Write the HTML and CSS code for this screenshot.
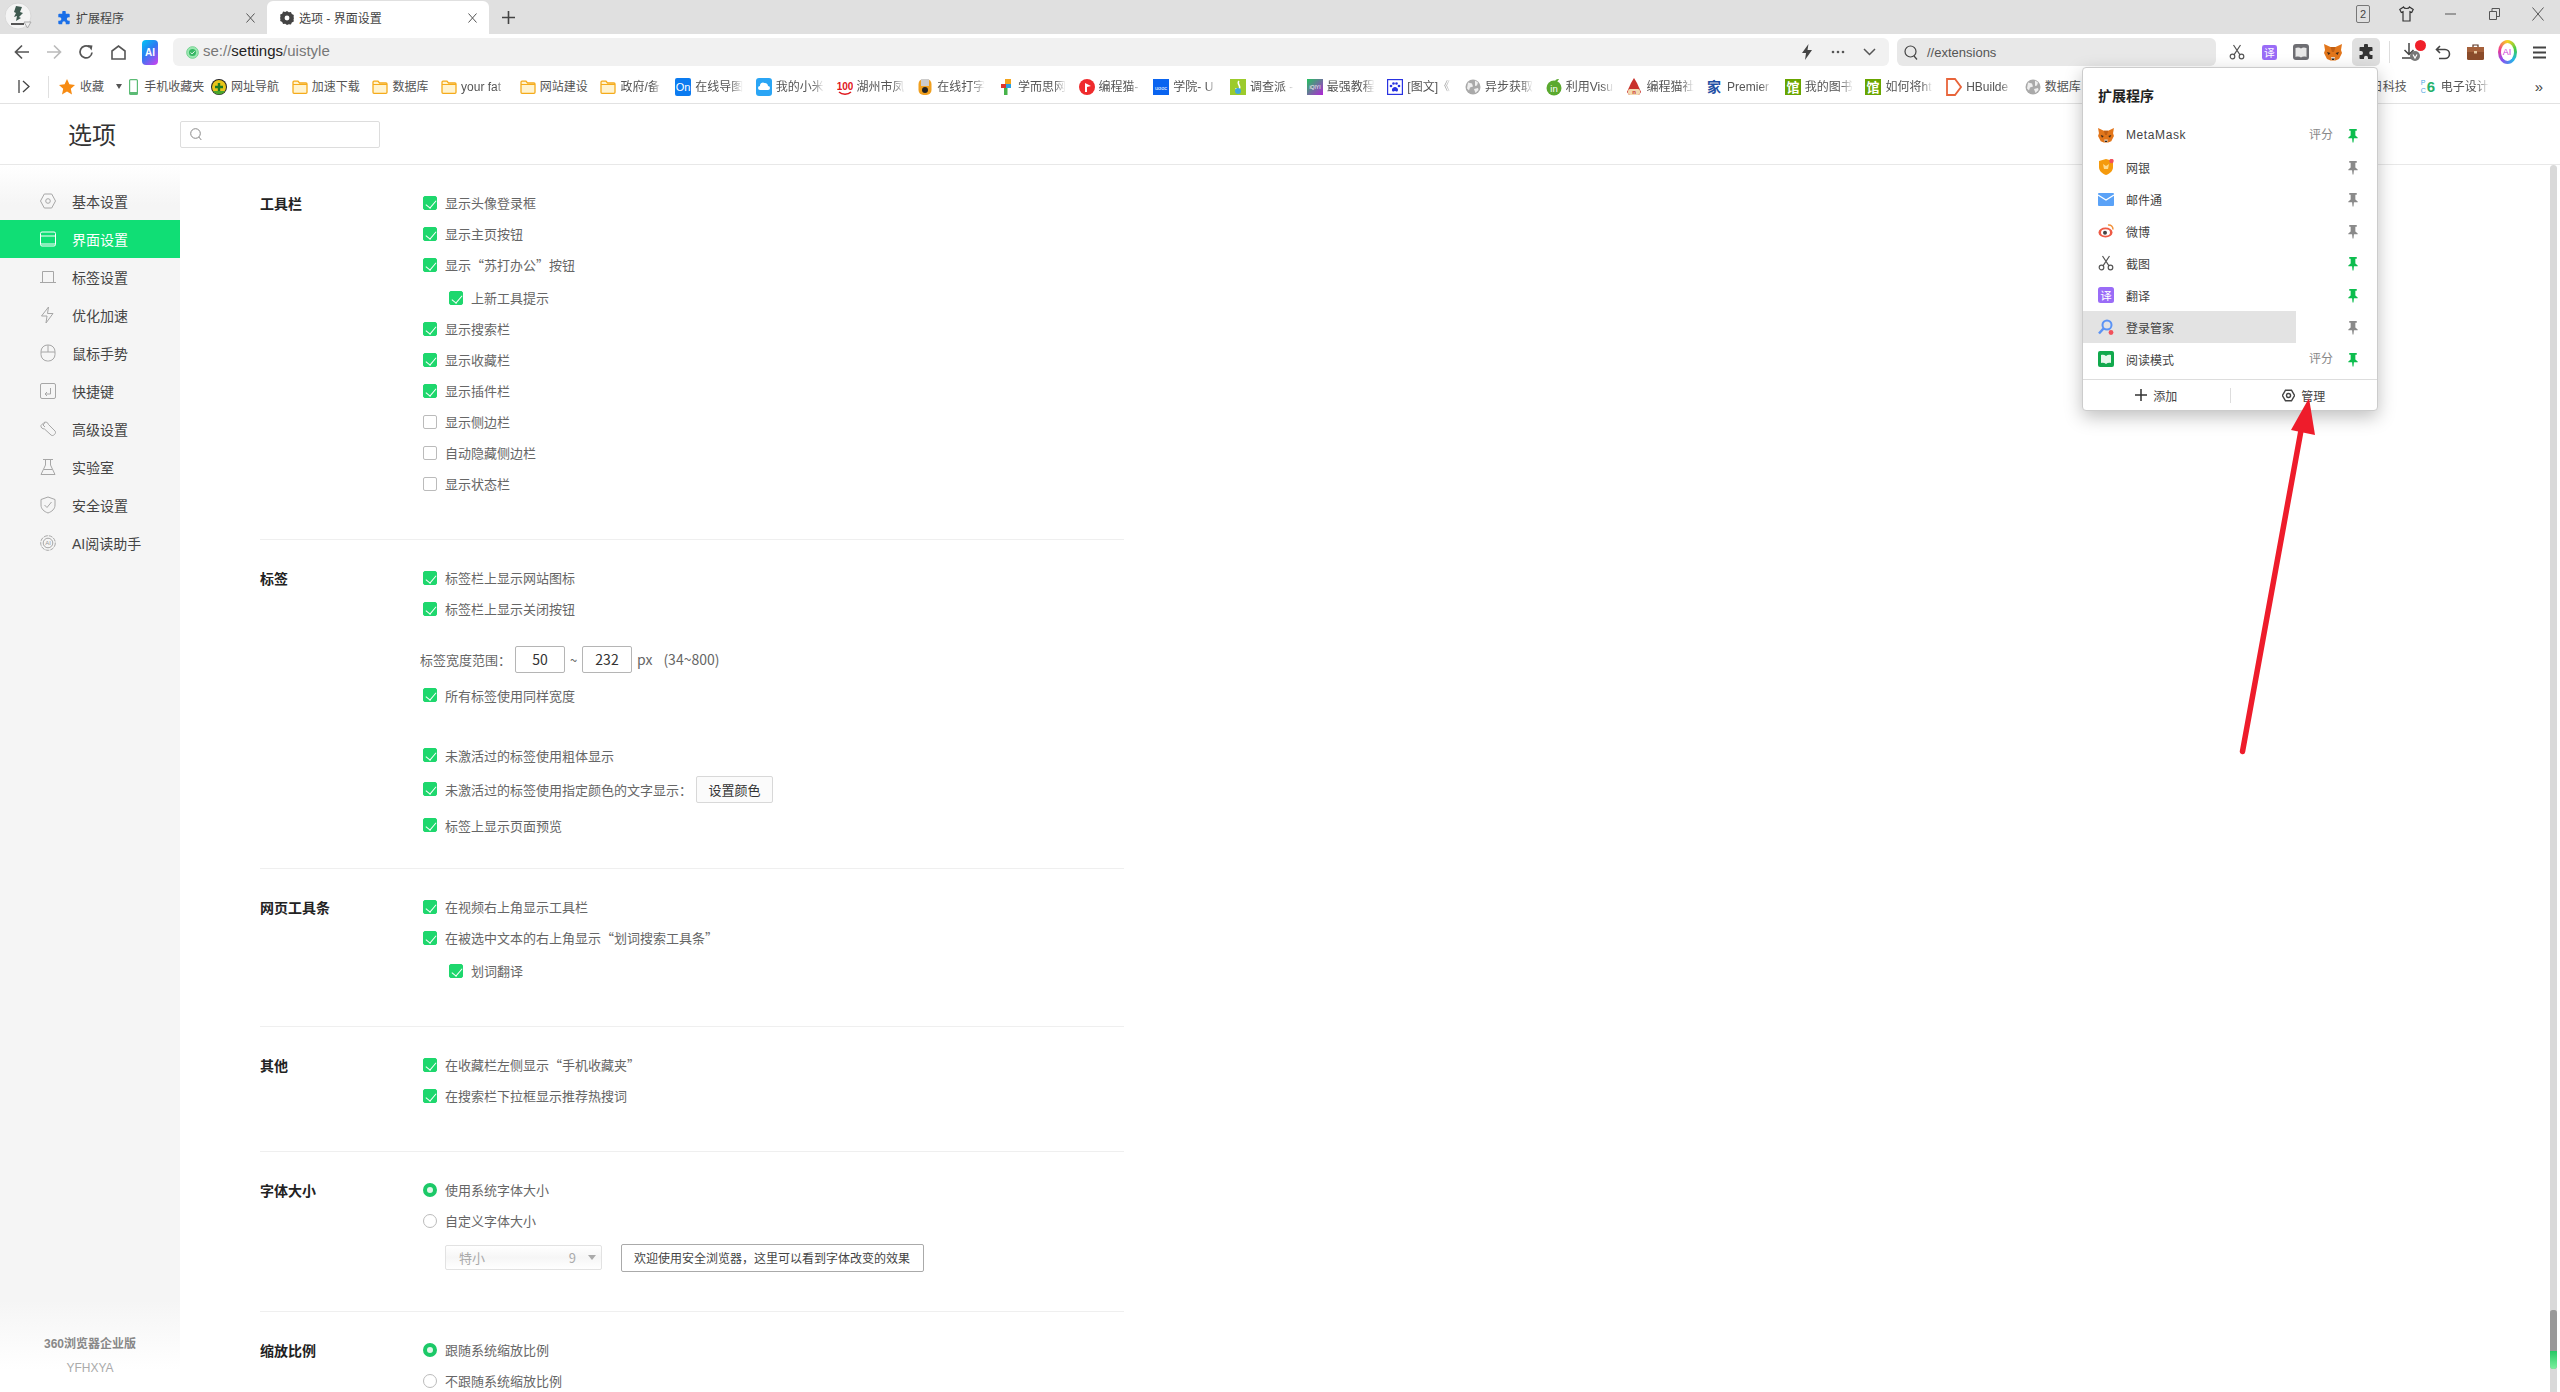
FILE: index.html
```html
<!DOCTYPE html>
<html lang="zh-CN">
<head>
<meta charset="utf-8">
<title>选项 - 界面设置</title>
<link rel="stylesheet" href="styles.css">
</head>
<body>
<svg class="sprite" aria-hidden="true">
  <symbol id="folder" viewBox="0 0 16 16"><path d="M1 3.2c0-.6.4-1 1-1h4l1.5 1.8H14c.6 0 1 .4 1 1v8.300c0 .6-.4 1-1 1H2c-.6 0-1-.4-1-1z" fill="#fff3cf" stroke="#f5ab1b" stroke-width="1.300"/><path d="M1 5.500h14" stroke="#f5ab1b"/></symbol>
  <symbol id="globe" viewBox="0 0 16 16"><circle cx="8" cy="8" r="7.500" fill="#a9a9a9"/><path d="M3 3.500l4 1 1 3-3 1-1 3-2-2zM10 1.500l3 2-1 3-2 .5zM9 10l4-1 .5 2-3 3z" fill="#eee"/></symbol>
  <symbol id="guan" viewBox="0 0 16 18"><rect y="1" width="16" height="16" fill="#68a500"/><text x="8" y="14" font-size="13" font-weight="700" text-anchor="middle" fill="#fff" font-family="Noto Sans CJK SC">馆</text></symbol>
  <symbol id="pin" viewBox="0 0 10 16"><path d="M1 1h8v2H7.500v5L10 10v1H6l-.5 4.500h-1L4 11H0v-1l2.500-2V3H1z"/></symbol>
  <symbol id="yi" viewBox="0 0 16 16"><rect width="16" height="16" rx="2.500" fill="#9a6cf7"/><text x="8" y="12.500" font-size="11.500" text-anchor="middle" fill="#fff" font-family="Noto Sans CJK SC">译</text></symbol>
  <symbol id="fox" viewBox="0 0 18 17"><path d="M0 0l6.500 3h5L18 0l-1 6 1 3-3 6-3.500 1.500h-5L3 15 0 9l1-3z" fill="#e2761b"/><path d="M3 8l3.500 1-2 2zM15 8l-3.500 1 2 2z" fill="#3a2a1c"/><path d="M7 13h4l-.5 3h-3z" fill="#e4d5c6"/><path d="M7.500 14.500h3L10 16H8z" fill="#222"/><path d="M6.500 3h5L10 8H8z" fill="#c05f14"/></symbol>
  <symbol id="scissors" viewBox="0 0 16 16"><g fill="none" stroke="#555" stroke-width="1.200"><circle cx="3.500" cy="12.500" r="2.300"/><circle cx="12.500" cy="12.500" r="2.300"/><path d="M5 10.800L11.500 1M11 10.800L4.500 1"/></g></symbol>
  <symbol id="puzzle" viewBox="0 0 16 16"><path d="M6 1.500a2 2 0 0 1 4 0V3h3.500c.6 0 1 .4 1 1v3h-1.300a2 2 0 0 0 0 4h1.300v3c0 .6-.4 1-1 1H10v-1.300a2 2 0 0 0-4 0V15H2.500c-.6 0-1-.4-1-1v-3H3a2 2 0 0 0 0-4H1.500V4c0-.6.4-1 1-1H6z"/></symbol>
  <symbol id="gear" viewBox="0 0 16 16"><path d="M4.300 1.500h7.400L15.500 8l-3.800 6.500H4.300L.5 8z" fill="none" stroke="currentColor" stroke-width="1.800"/><circle cx="8" cy="8" r="2.500" fill="none" stroke="currentColor" stroke-width="1.800"/></symbol>
</svg>

<header class="tabstrip">
  <div class="logo">
    <svg width="27" height="28" viewBox="0 0 27 28"><circle cx="13" cy="14" r="13" fill="#f4f4f4" stroke="#d8d8d8"/><path d="M11 4l6 1-2 5 3 1-4 4 2 1-5 3 1-5-3 1 2-4-2-1z" fill="#3f5a50"/><rect x="6" y="21" width="13" height="2" fill="#555"/><path d="M19 20h7l-3.500 6z" fill="#eee" stroke="#aaa"/></svg>
  </div>
  <div class="tab">
    <svg class="tab-ic tab-ic-blue" width="14" height="14"><use href="#puzzle"/></svg>
    <span class="tab-title">扩展程序</span>
    <svg class="tab-x" width="9" height="10" viewBox="0 0 9 10"><path d="M.5.500l8 9M8.500.500l-8 9" stroke="#555" fill="none"/></svg>
  </div>
  <div class="tab tab-active">
    <svg class="tab-ic" width="14" height="14" viewBox="0 0 16 16"><path d="M8 0l2 1.500 2.500-.3 1 2.300 2.300 1-.3 2.500L16 8l-.5 1.500.3 2.500-2.300 1-1 2.300-2.500-.3L8 16l-2-1.500-2.500.3-1-2.300-2.300-1 .3-2.500L0 8l.5-1.500L.2 4l2.300-1 1-2.300 2.500.3z" fill="#444"/><circle cx="8" cy="8" r="2.800" fill="#fff"/></svg>
    <span class="tab-title">选项 - 界面设置</span>
    <svg class="tab-x" width="9" height="10" viewBox="0 0 9 10"><path d="M.5.500l8 9M8.500.500l-8 9" stroke="#555" fill="none"/></svg>
  </div>
  <div class="newtab"><svg width="13" height="13" viewBox="0 0 13 13"><path d="M6.500 0v13M0 6.500h13" stroke="#444" stroke-width="1.600"/></svg></div>
  <div class="winctl">
    <div class="winbtn"><span class="count">2</span></div>
    <div class="winbtn"><svg width="15" height="16" viewBox="0 0 15 16"><path d="M4.500 1L.8 3.500l1.500 3 1.700-.8V15h7V5.700l1.700.8 1.500-3L10.500 1c-.5 2-5.500 2-6 0z" fill="none" stroke="#333" stroke-width="1.200"/></svg></div>
    <div class="winbtn"><svg width="11" height="2"><path d="M0 1h11" stroke="#555"/></svg></div>
    <div class="winbtn"><svg width="11" height="12" viewBox="0 0 11 12"><path d="M.5 3.500h7v8h-7zM3 3.500V.5h7.500v8H7.500" fill="none" stroke="#555"/></svg></div>
    <div class="winbtn"><svg width="12" height="14" viewBox="0 0 12 14"><path d="M.5.500l11 13M11.500.500l-11 13" stroke="#555" fill="none"/></svg></div>
  </div>
</header>

<nav class="toolbar">
  <div class="tbtn"><svg width="16" height="16" viewBox="0 0 16 16"><path d="M15 8H2M8 1.500L1.500 8 8 14.500" fill="none" stroke="#555" stroke-width="1.700"/></svg></div>
  <div class="tbtn"><svg width="16" height="16" viewBox="0 0 16 16"><path d="M1 8h13M8 1.500L14.500 8 8 14.500" fill="none" stroke="#bbb" stroke-width="1.700"/></svg></div>
  <div class="tbtn"><svg width="16" height="16" viewBox="0 0 16 16"><path d="M14 8.500A6 6 0 1 1 11.500 3" fill="none" stroke="#555" stroke-width="1.700"/><path d="M9.500 1l5 .5-1 5z" fill="#555"/></svg></div>
  <div class="tbtn"><svg width="15" height="15" viewBox="0 0 15 15"><path d="M1 14V6l6.500-5L14 6v8z" fill="none" stroke="#555" stroke-width="1.600"/></svg></div>
  <div class="tbtn"><span class="ai-badge">AI</span></div>
  <div class="addr">
    <svg width="13" height="13" viewBox="0 0 14 14"><circle cx="7" cy="7" r="6.300" fill="#9ce8b2" stroke="#6fd08c"/><circle cx="7" cy="7" r="3.800" fill="#37b765"/><path d="M5 7l1.500 1.500L9.300 5.700" fill="none" stroke="#fff"/></svg>
    <span class="url"><span class="url-dim">se://</span>settings<span class="url-dim">/uistyle</span></span>
    <span class="addr-actions">
      <svg width="12" height="16" viewBox="0 0 12 16"><path d="M7.500 0L1 9h4l-1 7 7-10H6.500z" fill="#444"/></svg>
      <svg width="14" height="4" viewBox="0 0 14 4"><circle cx="2" cy="2" r="1.300" fill="#555"/><circle cx="7" cy="2" r="1.300" fill="#555"/><circle cx="12" cy="2" r="1.300" fill="#555"/></svg>
      <svg width="13" height="8" viewBox="0 0 13 8"><path d="M1 1l5.500 5.500L12 1" fill="none" stroke="#555" stroke-width="1.500"/></svg>
    </span>
  </div>
  <div class="searchbar">
    <svg width="14" height="15" viewBox="0 0 14 15"><circle cx="6.500" cy="6.500" r="5.500" fill="none" stroke="#444" stroke-width="1.200"/><path d="M10 11l3 3.500" stroke="#444" stroke-width="1.200"/></svg>
    <span class="search-text">//extensions</span>
  </div>
  <div class="ext-icons">
    <div class="tbtn"><svg width="16" height="16"><use href="#scissors"/></svg></div>
    <div class="tbtn"><svg width="15" height="15"><use href="#yi"/></svg></div>
    <div class="tbtn"><svg width="16" height="16" viewBox="0 0 16 16"><rect width="16" height="16" rx="3" fill="#6e6e73"/><path d="M2.500 4c2-.8 4-.8 5.500.5v9c-1.500-1.200-3.500-1.200-5.500-.5zM13.500 4c-2-.8-4-.8-5.500.5v9c1.500-1.200 3.500-1.200 5.500-.5z" fill="#e8e8e8"/></svg></div>
    <div class="tbtn"><svg width="18" height="17"><use href="#fox"/></svg></div>
    <div class="tbtn tbtn-on"><svg class="ic-dark" width="16" height="16"><use href="#puzzle"/></svg></div>
  </div>
  <span class="tsep"></span>
  <div class="tbtn tbtn-dl">
    <svg width="20" height="20" viewBox="0 0 20 20"><path d="M8 1v11M3.500 8L8 12.500 12.500 8M1 16h10" fill="none" stroke="#444" stroke-width="1.500"/><circle cx="14" cy="14" r="5" fill="#777"/><path d="M12 12.500l2 3.500 2-3.500" fill="none" stroke="#fff" stroke-width="1.200"/></svg>
    <span class="dot"></span>
  </div>
  <div class="tbtn"><svg width="16" height="15" viewBox="0 0 16 15"><path d="M5 1L1.500 4.500 5 8M2 4.500h8a4.500 4.500 0 0 1 0 9H4" fill="none" stroke="#444" stroke-width="1.600"/></svg></div>
  <div class="tbtn"><svg width="17" height="16" viewBox="0 0 17 16"><path d="M6 3V1h5v2" fill="none" stroke="#5a3320" stroke-width="1.200"/><rect y="3" width="17" height="13" rx="1.500" fill="#8a4b2a"/><rect y="3" width="17" height="5" fill="#a5603a"/><rect x="7" y="7" width="3" height="2.500" fill="#e8c9a0"/></svg></div>
  <div class="tbtn"><span class="ai-ring"><span class="ai-ring-in">AI</span></span></div>
  <div class="tbtn"><svg width="13" height="13" viewBox="0 0 13 13"><path d="M0 1.500h13M0 6.500h13M0 11.500h13" stroke="#444" stroke-width="1.800"/></svg></div>
</nav>

<nav class="bookmarks">
  <svg class="bm-toggle" width="12" height="13" viewBox="0 0 12 13"><path d="M1 0v13M5 1l6 5.500L5 12" fill="none" stroke="#444" stroke-width="1.300"/></svg>
  <span class="bm-sep"></span>
  <div class="bm bm-fav"><svg width="16" height="16" viewBox="0 0 16 16"><path d="M8 0l2.400 5.300 5.600.6-4.200 3.800 1.200 5.800L8 12.500 3 15.500l1.200-5.800L0 5.900l5.600-.6z" fill="#f78b12"/></svg><span>收藏</span></div>
  <span class="bm-caret"></span>
  <div class="bm bm-phone"><svg width="9" height="16" viewBox="0 0 9 16"><rect x=".6" y=".6" width="7.800" height="14.800" rx="1" fill="#fff" stroke="#5cbb75" stroke-width="1.200"/><rect x=".6" y="13" width="7.800" height="2.400" fill="#5cbb75"/></svg><span>手机收藏夹</span></div>
  <div class="bm"><svg width="16" height="16" viewBox="0 0 16 16"><circle cx="8" cy="8" r="8" fill="#222"/><circle cx="8" cy="8" r="7" fill="#e8c51a"/><path d="M2 12a7 7 0 0 0 12 0z" fill="#4aa52c"/><path d="M8 4v8M4 8h8" stroke="#1e7a22" stroke-width="2.400"/></svg><span>网址导航</span></div>
  <div class="bm"><svg width="16" height="16"><use href="#folder"/></svg><span>加速下载</span></div>
  <div class="bm"><svg width="16" height="16"><use href="#folder"/></svg><span class="w36">数据库</span></div>
  <div class="bm"><svg width="16" height="16"><use href="#folder"/></svg><span class="clip w46">your fat</span></div>
  <div class="bm"><svg width="16" height="16"><use href="#folder"/></svg><span>网站建设</span></div>
  <div class="bm"><svg width="16" height="16"><use href="#folder"/></svg><span class="clip w42">政府/备</span></div>
  <div class="bm"><svg width="16" height="18" viewBox="0 0 16 18"><rect width="16" height="18" rx="2" fill="#0b7bf0"/><text x="8" y="13" font-size="11" text-anchor="middle" fill="#fff" font-family="Liberation Sans">On</text></svg><span class="clip">在线导图</span></div>
  <div class="bm"><svg width="16" height="18" viewBox="0 0 16 18"><rect width="16" height="18" rx="3" fill="#2aa5f5"/><path d="M4 12a2 2 0 0 1 0-4 3 3 0 0 1 4.500-3A3 3 0 0 1 12 8a2 2 0 0 1 0 4z" fill="#fff"/></svg><span class="clip">我的小米</span></div>
  <div class="bm"><svg width="16" height="18" viewBox="0 0 16 18"><text x="8" y="12" font-size="10" font-weight="700" text-anchor="middle" fill="#e0161c" font-family="Liberation Sans">100</text><path d="M2 14c3 3 9 3 12 0" fill="none" stroke="#e0161c" stroke-width="1.500"/></svg><span class="clip">湖州市凤</span></div>
  <div class="bm"><svg width="16" height="18" viewBox="0 0 16 18"><rect x="1.500" y="1" width="13" height="16" rx="5" fill="#f0a020"/><rect x="4" y="1" width="8" height="7" fill="#ccc"/><circle cx="8" cy="12" r="3" fill="#222"/></svg><span class="clip">在线打字</span></div>
  <div class="bm"><svg width="16" height="18" viewBox="0 0 16 18"><rect x="7" y="1" width="6" height="5" fill="#f3a41c"/><rect x="3" y="6" width="5" height="4" fill="#e0352b"/><rect x="8" y="6" width="5" height="4" fill="#2aa0e0"/><rect x="6" y="10" width="3.500" height="7" fill="#46b34a"/></svg><span class="clip">学而思网</span></div>
  <div class="bm"><svg width="16" height="18" viewBox="0 0 16 18"><circle cx="8" cy="9" r="8" fill="#ef2b2d"/><path d="M6 14V5l6 3-4 1v5z" fill="#fff"/></svg><span class="clip w42">编程猫-</span></div>
  <div class="bm"><svg width="16" height="18" viewBox="0 0 16 18"><rect y="1" width="16" height="16" fill="#0a64f0"/><text x="8" y="11.500" font-size="5.500" text-anchor="middle" fill="#fff" font-family="Liberation Sans">uooc</text></svg><span class="clip w44">学院- U</span></div>
  <div class="bm"><svg width="16" height="18" viewBox="0 0 16 18"><rect y="1" width="16" height="16" fill="#9ccb2c"/><path d="M9 3c-3 3 3 5 0 8-1 1-3 1-3-1" fill="none" stroke="#fff" stroke-width="1.500"/><circle cx="8" cy="13" r="3" fill="#3fa7dc"/></svg><span class="clip w44">调查派 -</span></div>
  <div class="bm"><svg width="16" height="18" viewBox="0 0 16 18"><defs><linearGradient id="iq" x1="0" y1="0" x2="1" y2="1"><stop offset="0" stop-color="#22c45e"/><stop offset="1" stop-color="#b324d8"/></linearGradient></defs><rect y="1" width="16" height="16" fill="url(#iq)"/><text x="8" y="11" font-size="5" text-anchor="middle" fill="#fff" font-family="Liberation Sans">iQIYI</text></svg><span class="clip">最强教程</span></div>
  <div class="bm"><svg width="16" height="18" viewBox="0 0 16 18"><rect x=".6" y="1.600" width="14.800" height="14.800" fill="#fff" stroke="#2932e1" stroke-width="1.200"/><path d="M8 9c-3 0-4 4-2 4.500 1 .2 1.500-.5 2-.5s1 .7 2 .5c2-.5 1-4.500-2-4.500z" fill="#2932e1"/><circle cx="4" cy="8" r="1.300" fill="#2932e1"/><circle cx="12" cy="8" r="1.300" fill="#2932e1"/><circle cx="6.500" cy="5.500" r="1.300" fill="#2932e1"/><circle cx="9.500" cy="5.500" r="1.300" fill="#2932e1"/></svg><span class="clip w45">[图文]《</span></div>
  <div class="bm"><svg width="16" height="16"><use href="#globe"/></svg><span class="clip">异步获取</span></div>
  <div class="bm"><svg width="16" height="18" viewBox="0 0 16 18"><ellipse cx="8" cy="10" rx="7.500" ry="7.500" fill="#5aa92f"/><path d="M9 3c1-2 3-2 4-2-1 2-2 3-4 2z" fill="#5aa92f"/><text x="8" y="14" font-size="9.500" text-anchor="middle" fill="#fff" font-family="Liberation Sans">in</text></svg><span class="clip">利用Visu</span></div>
  <div class="bm"><svg width="16" height="18" viewBox="0 0 16 18"><path d="M8 0l3 5 4 9-2 3H3l-2-3 4-9z" fill="#c9312b"/><rect x="2" y="11" width="12" height="6" rx="2" fill="#f2d9b0"/><text x="8" y="15.500" font-size="6" font-weight="700" text-anchor="middle" fill="#c9312b" font-family="Liberation Sans">n</text></svg><span class="clip">编程猫社</span></div>
  <div class="bm"><span class="jia">家</span><span class="clip w45">Premier</span></div>
  <div class="bm"><svg width="16" height="18"><use href="#guan"/></svg><span class="clip">我的图书</span></div>
  <div class="bm"><svg width="16" height="18"><use href="#guan"/></svg><span class="clip">如何将ht</span></div>
  <div class="bm"><svg width="16" height="18" viewBox="0 0 16 18"><path d="M1 1h8l6 8-6 8H1z" fill="#fff" stroke="#e8643a" stroke-width="1.800"/></svg><span class="clip w46">HBuilde</span></div>
  <div class="bm"><svg width="16" height="16"><use href="#globe"/></svg><span class="w36">数据库</span></div>
  <div class="bm-right">
    <div class="bm"><span>今日科技</span></div>
    <div class="bm"><span class="pc6"><span class="pc6-pc">P<br>C</span><span class="pc6-6">6</span></span><span class="clip">电子设计</span></div>
    <span class="bm-more">»</span>
  </div>
</nav>

<div class="page-head">
  <h1 class="page-title">选项</h1>
  <div class="page-search"><svg width="12" height="13" viewBox="0 0 12 13"><circle cx="5.500" cy="5.500" r="4.800" fill="none" stroke="#888"/><path d="M8.800 9l2.500 3" stroke="#888"/></svg></div>
</div>

<div class="layout">
  <aside class="sidebar">
    <a class="side-item"><svg width="16" height="16" viewBox="0 0 16 16"><path d="M4.300 1h7.400L15.500 8l-3.800 7H4.300L.5 8z"/><circle cx="8" cy="8" r="2.300"/></svg>基本设置</a>
    <a class="side-item side-active"><svg width="16" height="16" viewBox="0 0 16 16"><rect x=".5" y="1" width="15" height="14" rx="1.500"/><path d="M.5 5h15M.5 13h15"/></svg>界面设置</a>
    <a class="side-item"><svg width="16" height="16" viewBox="0 0 16 16"><path d="M2.500 13V2.500h11V13M0 13.500h16"/></svg>标签设置</a>
    <a class="side-item"><svg width="16" height="18" viewBox="0 0 16 18"><path d="M8.500 1L1.500 10h5.500l-1 7 7-9.500H7.500z"/></svg>优化加速</a>
    <a class="side-item"><svg width="16" height="18" viewBox="0 0 16 18"><rect x="1" y="1" width="14" height="16" rx="6.500"/><path d="M1 8h14M8 1v7"/></svg>鼠标手势</a>
    <a class="side-item"><svg width="16" height="16" viewBox="0 0 16 16"><rect x=".5" y=".5" width="15" height="15" rx="1.500"/><path d="M10.500 5v6H5M7 9l-2 2 2 2"/></svg>快捷键</a>
    <a class="side-item"><svg width="16" height="16" viewBox="0 0 16 16"><path d="M1 4.500L4 1.500c2-1 4 0 4.500 2L15 10c1 1 .5 2.500-.5 3.500s-2.500 1.500-3.500.5L4.500 8C2.500 8 .5 6.500 1 4.500zM5 1.500L3 4l2 2"/></svg>高级设置</a>
    <a class="side-item"><svg width="16" height="16" viewBox="0 0 16 16"><path d="M3 .5h10M5.500.5V6L1 15.500h14L10.500 6V.5M4 10.500h8"/></svg>实验室</a>
    <a class="side-item"><svg width="16" height="18" viewBox="0 0 16 18"><path d="M8 1l7 2.500V9c0 4-3 6.500-7 8-4-1.500-7-4-7-8V3.500zM4.500 9L7 11.500 11.500 6"/></svg>安全设置</a>
    <a class="side-item"><svg width="16" height="16" viewBox="0 0 16 16"><circle cx="8" cy="8" r="7.300" stroke-dasharray="4 1"/><circle cx="8" cy="8" r="4.800"/><text x="8" y="10.300" font-size="6" text-anchor="middle" fill="#999" stroke="none" font-family="Liberation Sans">AI</text></svg>AI阅读助手</a>
    <div class="side-foot">
      <div class="foot-name">360浏览器企业版</div>
      <div class="foot-id">YFHXYA</div>
    </div>
  </aside>

  <main class="content">
    <section class="section">
      <h2 class="sec-label">工具栏</h2>
      <div class="sec-rows">
        <label class="row"><i class="cb on"></i>显示头像登录框</label>
        <label class="row"><i class="cb on"></i>显示主页按钮</label>
        <label class="row"><i class="cb on"></i>显示“苏打办公”按钮</label>
        <label class="row sub"><i class="cb on"></i>上新工具提示</label>
        <label class="row"><i class="cb on"></i>显示搜索栏</label>
        <label class="row"><i class="cb on"></i>显示收藏栏</label>
        <label class="row"><i class="cb on"></i>显示插件栏</label>
        <label class="row"><i class="cb"></i>显示侧边栏</label>
        <label class="row"><i class="cb"></i>自动隐藏侧边栏</label>
        <label class="row"><i class="cb"></i>显示状态栏</label>
      </div>
    </section>
    <section class="section section-tight">
      <h2 class="sec-label">标签</h2>
      <div class="sec-rows">
        <label class="row"><i class="cb on"></i>标签栏上显示网站图标</label>
        <label class="row"><i class="cb on"></i>标签栏上显示关闭按钮</label>
        <div class="row-range">
          <span class="range-label">标签宽度范围：</span><span class="num">50</span><span class="tilde">~</span><span class="num">232</span><span class="unit">px</span><span class="hint">(34~800)</span>
        </div>
        <label class="row after-range"><i class="cb on"></i>所有标签使用同样宽度</label>
        <label class="row after-gap"><i class="cb on"></i>未激活过的标签使用粗体显示</label>
        <label class="row with-btn"><i class="cb on"></i>未激活过的标签使用指定颜色的文字显示：<span class="btn">设置颜色</span></label>
        <label class="row after-btn"><i class="cb on"></i>标签上显示页面预览</label>
      </div>
    </section>
    <section class="section">
      <h2 class="sec-label">网页工具条</h2>
      <div class="sec-rows">
        <label class="row"><i class="cb on"></i>在视频右上角显示工具栏</label>
        <label class="row"><i class="cb on"></i>在被选中文本的右上角显示“划词搜索工具条”</label>
        <label class="row sub"><i class="cb on"></i>划词翻译</label>
      </div>
    </section>
    <section class="section">
      <h2 class="sec-label">其他</h2>
      <div class="sec-rows">
        <label class="row"><i class="cb on"></i>在收藏栏左侧显示“手机收藏夹”</label>
        <label class="row"><i class="cb on"></i>在搜索栏下拉框显示推荐热搜词</label>
      </div>
    </section>
    <section class="section">
      <h2 class="sec-label">字体大小</h2>
      <div class="sec-rows">
        <label class="row"><i class="rd on"></i>使用系统字体大小</label>
        <label class="row"><i class="rd"></i>自定义字体大小</label>
        <div class="row-font">
          <div class="select"><span>特小</span><span class="select-num">9</span><span class="select-caret"></span></div>
          <div class="preview">欢迎使用安全浏览器，这里可以看到字体改变的效果</div>
        </div>
      </div>
    </section>
    <section class="section section-last">
      <h2 class="sec-label">缩放比例</h2>
      <div class="sec-rows">
        <label class="row"><i class="rd on"></i>跟随系统缩放比例</label>
        <label class="row"><i class="rd"></i>不跟随系统缩放比例</label>
      </div>
    </section>
  </main>

  <div class="scrollbar"><div class="thumb"><div class="thumb-green"></div></div></div>
</div>

<div class="popup">
  <div class="popup-title">扩展程序</div>
  <div class="ext-row"><div class="ext-main"><svg width="16" height="15"><use href="#fox"/></svg><span class="ext-name ext-latin">MetaMask</span></div><span class="ext-score">评分</span><svg class="pin pin-on" width="10" height="15"><use href="#pin"/></svg></div>
  <div class="ext-row"><div class="ext-main"><svg width="16" height="16" viewBox="0 0 16 16"><path d="M1 2l7-2 7 2v6c0 4-3 6.500-7 8-4-1.500-7-4-7-8z" fill="#f59a0c"/><path d="M5 5l3 2 3-2-1 5H6z" fill="#ffd98a"/><circle cx="13.500" cy="2" r="2.200" fill="#f2515b"/></svg><span class="ext-name">网银</span></div><span class="ext-score"></span><svg class="pin" width="10" height="15"><use href="#pin"/></svg></div>
  <div class="ext-row"><div class="ext-main"><svg width="16" height="13" viewBox="0 0 16 13"><rect width="16" height="13" rx="1" fill="#5aa2f7"/><path d="M0 2l8 5 8-5" fill="none" stroke="#fff" stroke-width="1.300"/></svg><span class="ext-name">邮件通</span></div><span class="ext-score"></span><svg class="pin" width="10" height="15"><use href="#pin"/></svg></div>
  <div class="ext-row"><div class="ext-main"><svg width="16" height="14" viewBox="0 0 16 14"><ellipse cx="7.500" cy="8.500" rx="7" ry="5" fill="#ee5a45"/><ellipse cx="7.500" cy="8.500" rx="4.500" ry="3.200" fill="#fff"/><circle cx="7" cy="8.800" r="2" fill="#444"/><path d="M10 1c3-.5 5 1.500 5 4.500" fill="none" stroke="#f2913a" stroke-width="1.500"/></svg><span class="ext-name">微博</span></div><span class="ext-score"></span><svg class="pin" width="10" height="15"><use href="#pin"/></svg></div>
  <div class="ext-row"><div class="ext-main"><svg width="16" height="16"><use href="#scissors"/></svg><span class="ext-name">截图</span></div><span class="ext-score"></span><svg class="pin pin-on" width="10" height="15"><use href="#pin"/></svg></div>
  <div class="ext-row"><div class="ext-main"><svg width="16" height="16"><use href="#yi"/></svg><span class="ext-name">翻译</span></div><span class="ext-score"></span><svg class="pin pin-on" width="10" height="15"><use href="#pin"/></svg></div>
  <div class="ext-row"><div class="ext-main ext-hover"><svg width="16" height="16" viewBox="0 0 16 16"><circle cx="9" cy="6" r="4.500" fill="none" stroke="#5b93f5" stroke-width="2"/><path d="M5.500 9.500L1 14.500" stroke="#5b93f5" stroke-width="2.500"/><circle cx="13" cy="13.500" r="2.400" fill="#f2515b"/></svg><span class="ext-name">登录管家</span></div><span class="ext-score"></span><svg class="pin" width="10" height="15"><use href="#pin"/></svg></div>
  <div class="ext-row"><div class="ext-main"><svg width="16" height="16" viewBox="0 0 16 16"><rect width="16" height="16" rx="2" fill="#11a94d"/><path d="M3 4c2-.5 3.500-.3 5 1v8c-1.500-1.200-3-1.400-5-1zM13 4c-2-.5-3.500-.3-5 1v8c1.500-1.200 3-1.400 5-1z" fill="#e6f7ec"/></svg><span class="ext-name">阅读模式</span></div><span class="ext-score">评分</span><svg class="pin pin-on" width="10" height="15"><use href="#pin"/></svg></div>
  <div class="popup-foot">
    <div class="foot-act"><svg width="12" height="12" viewBox="0 0 12 12"><path d="M6 0v12M0 6h12" stroke="#333" stroke-width="1.500"/></svg>添加</div>
    <span class="foot-sep"></span>
    <div class="foot-act"><svg class="foot-gear" width="13" height="13"><use href="#gear"/></svg>管理</div>
  </div>
</div>

<svg class="arrow" width="90" height="370" viewBox="2235 395 90 370" aria-hidden="true">
  <path d="M2242.500 751.500L2302 425" fill="none" stroke="#ee1c2b" stroke-width="5.500" stroke-linecap="round"/>
  <path d="M2309 398L2315 435 2291 430z" fill="#ee1c2b"/>
</svg>
</body>
</html>
```

FILE: styles.css
```css
* { box-sizing: border-box; }
html, body { margin: 0; height: 100%; overflow: hidden; }
body {
  position: relative;
  display: flex;
  flex-direction: column;
  height: 1392px;
  background: #fff;
  color: #555;
  font-family: "Liberation Sans", "Noto Sans CJK SC", sans-serif;
  font-size: 13px;
}
svg { display: block; flex: none; }
.sprite { display: none; }

/* tab strip */
.tabstrip { display: flex; align-items: flex-end; height: 34px; flex: none; background: #e0e0e0; }
.logo { align-self: flex-start; margin: 2px 13px 0 5px; width: 27px; }
.tab { display: flex; align-items: center; width: 222px; height: 33px; padding-left: 12px; position: relative; font-size: 12px; color: #444; }
.tab-active { background: #fff; border-radius: 6px 6px 0 0; padding-left: 13px; }
.tab-ic { margin-right: 5px; }
.tab-ic-blue { fill: #1a6fe8; }
.tab-title { white-space: nowrap; }
.tab-x { margin-left: auto; margin-right: 12px; }
.newtab { display: flex; justify-content: center; align-items: center; width: 38px; height: 33px; }
.winctl { display: flex; align-items: center; margin-left: auto; align-self: flex-start; height: 28px; }
.winbtn { display: flex; width: 43.750px; justify-content: center; align-items: center; }
.count { display: block; width: 14px; height: 18px; border: 1px solid #777; border-radius: 2px; font-size: 11px; line-height: 16px; text-align: center; color: #444; }

/* toolbar */
.toolbar { display: flex; align-items: center; height: 36px; flex: none; padding: 0 5px 0 6px; background: #fff; }
.tbtn { position: relative; display: flex; width: 32px; height: 28px; justify-content: center; align-items: center; flex: none; }
.tbtn-on { width: 28px; margin-left: 3px; background: #e0e0e0; border-radius: 5px; }
.ic-dark { fill: #333; }
.ai-badge { display: block; width: 16px; height: 25px; border-radius: 4px; background: linear-gradient(135deg, #00c6f5, #2c7bf2 45%, #d43df0); color: #fff; font-size: 10px; line-height: 25px; text-align: center; font-weight: 700; }
.addr { display: flex; align-items: center; flex: 1; height: 28px; margin-left: 7px; padding-left: 13px; background: #f1f1f1; border-radius: 6px; }
.url { margin-left: 4px; font-size: 15px; line-height: 26px; padding-bottom: 2px; color: #222; white-space: nowrap; }
.url-dim { color: #777; }
.addr-actions { display: flex; align-items: center; margin-left: auto; gap: 18px; padding-right: 13px; }
.searchbar { display: flex; align-items: center; width: 319px; height: 28px; margin-left: 8px; padding-left: 7px; background: #e8e8e8; border-radius: 6px; }
.search-text { margin-left: 9px; font-size: 13px; color: #555; }
.ext-icons { display: flex; align-items: center; margin-left: 5px; }
.tsep { width: 1px; height: 22px; margin: 0 5px 0 9px; background: #ddd; }
.dot { position: absolute; top: 2px; right: 1px; width: 11px; height: 11px; border-radius: 50%; background: #f0202a; }
.ai-ring { display: block; width: 19px; height: 24px; padding: 3px; border-radius: 50%; background: conic-gradient(#f7d21e, #3ccb4a, #23b6e8, #8f4af0, #f03a8c, #f7d21e); }
.ai-ring-in { display: block; width: 13px; height: 18px; border-radius: 50%; background: #fff; font-size: 9px; line-height: 18px; text-align: center; color: #d03ad8; }

/* bookmarks */
.bookmarks { display: flex; align-items: center; height: 34px; flex: none; padding-left: 18px; padding-right: 17px; gap: 12.700px; border-bottom: 1px solid #e2e2e2; font-size: 12px; color: #555; white-space: nowrap; }
.bm-toggle { margin-right: 5.300px; }
.bm-sep { width: 1px; height: 22px; background: #e0e0e0; margin-right: -2.700px; }
.bm { display: flex; align-items: center; gap: 4px; flex: none; }
.bm > span { display: block; overflow: hidden; width: 48px; line-height: 18px; }
.bm-fav { gap: 5px; }
.bm-fav > span { width: 25px; }
.bm-caret { width: 0; height: 0; margin: 0 -5px 0 -2px; border: 3px solid transparent; border-top: 5px solid #555; border-bottom: 0; }
.bm-phone { gap: 6px; margin-right: -6px; }
.bm-phone > span { width: 60px; }
.bm > .w36 { width: 36px; }
.bm > .w42 { width: 42px; }
.bm > .w44 { width: 44px; }
.bm > .w45 { width: 45px; }
.bm > .w46 { width: 46px; }
.clip { -webkit-mask-image: linear-gradient(to right, #000 75%, transparent); mask-image: linear-gradient(to right, #000 75%, transparent); }
.bm > .jia { width: 16px; color: #1f4fa3; font-size: 14px; font-weight: 700; line-height: 18px; }
.bm > .pc6 { display: flex; align-items: center; width: 16px; overflow: visible; }
.pc6-pc { font-size: 7px; line-height: 8px; color: #4aa3e0; margin-right: 1px; }
.pc6-6 { font-size: 15px; line-height: 16px; font-weight: 700; color: #25b06a; }
.bm-right { display: flex; align-items: center; margin-left: auto; gap: 14px; }
.bm-more { margin-left: 32px; font-size: 15px; color: #444; }

/* page header */
.page-head { display: flex; align-items: center; height: 61px; flex: none; padding-left: 68px; border-bottom: 1px solid #e8e8e8; }
.page-title { width: 112px; margin: 0; font-family: "Noto Sans CJK SC", sans-serif; font-size: 24px; font-weight: 400; line-height: 32px; color: #333; }
.page-search { display: flex; align-items: center; width: 200px; height: 27px; padding-left: 9px; border: 1px solid #ddd; border-radius: 2px; }

/* layout */
.layout { display: flex; flex: 1; min-height: 0; }
.sidebar { display: flex; flex-direction: column; flex: none; width: 180px; padding-top: 17px; background: linear-gradient(to bottom, #fff 0, #f5f5f5 40px, #f5f5f5 1135px, #fff 1205px); }
.side-item { display: flex; align-items: center; height: 38px; padding: 0 0 1px 40px; gap: 16px; font-size: 14px; color: #444; }
.side-item svg { fill: none; stroke: #a6a6a6; stroke-width: 1; }
.side-active { background: #10de75; color: #fff; }
.side-active svg { stroke: #fff; }
.side-foot { margin-top: auto; padding-bottom: 16px; text-align: center; }
.foot-name { font-size: 12px; line-height: 20px; color: #888; font-weight: 700; }
.foot-id { margin-top: 6px; font-size: 12px; line-height: 16px; color: #aaa; }

.content { flex: 1; min-width: 0; overflow: hidden; padding-left: 80px; font-family: "Noto Sans CJK SC", sans-serif; }

.section { display: flex; width: 864px; padding: 22.500px 0 39.500px; border-bottom: 1px solid #efefef; }
.section-tight { padding-bottom: 27px; }
.section-last { border-bottom: 0; }
.sec-label { width: 163px; flex: none; margin: 0; font-size: 14px; font-weight: 700; line-height: 30px; color: #222; }
.sec-rows { flex: 1; min-width: 0; }
.row { display: flex; align-items: center; height: 31px; padding-bottom: 1px; gap: 8px; font-size: 13px; color: #666; white-space: nowrap; }
.sub { padding-left: 26px; margin-top: 2px; }
.cb, .rd { position: relative; display: block; width: 14px; height: 14px; flex: none; background: #fff; border: 1px solid #bbb; }
.cb { border-radius: 2px; }
.cb.on { background: #1ed76d; border-color: #1ed76d; }
.cb.on::after { content: ""; position: absolute; left: 4px; top: 1px; width: 5px; height: 9px; border: solid #fff; border-width: 0 1.500px 1.500px 0; transform: rotate(40deg); }
.rd { border-radius: 50%; }
.rd.on { border: 4px solid #1cc968; background: #e4f7eb; }
.row-range { display: flex; align-items: center; height: 27px; margin: 21px 0 0 -3px; font-size: 13px; color: #666; white-space: nowrap; }
.range-label { width: 95px; }
.num { display: block; width: 50px; height: 27px; border: 1px solid #b5b5b5; border-radius: 2px; font-size: 14px; line-height: 25px; text-align: center; color: #333; }
.tilde { width: 17px; text-align: center; }
.unit { margin-left: 5px; font-size: 14px; }
.hint { margin-left: 11px; font-size: 14px; }
.after-range { margin-top: 7.500px; }
.after-gap { margin-top: 29px; }
.with-btn { margin-top: 3px; }
.after-btn { margin-top: 5px; }
.btn { display: block; width: 77px; height: 27px; margin-left: -4px; border: 1px solid #d8d8d8; border-radius: 2px; background: #fbfbfb; font-size: 13px; line-height: 25px; text-align: center; color: #333; }
.row-font { display: flex; align-items: center; gap: 19px; height: 28px; margin-top: 7px; padding-left: 22px; }
.select { display: flex; align-items: center; width: 157px; height: 25px; padding-left: 13px; border: 1px solid #e2e2e2; border-radius: 2px; background: linear-gradient(#fff, #f6f6f6 50%, #fff); font-size: 13px; color: #aaa; }
.select-num { margin-left: auto; }
.select-caret { width: 0; height: 0; margin: 0 5px 0 12px; border: 4px solid transparent; border-top: 5px solid #aaa; border-bottom: 0; }
.preview { width: 303px; height: 28px; padding-left: 12px; border: 1px solid #aaa; border-radius: 2px; font-size: 12px; line-height: 26px; color: #444; white-space: nowrap; }

.scrollbar { display: flex; flex-direction: column; justify-content: flex-end; flex: none; width: 7px; margin-right: 3px; padding-bottom: 23px; background: #d9d9d9; border-radius: 4px 4px 0 0; }
.thumb { height: 59px; padding-top: 41px; background: #999; border-radius: 3px 3px 4px 4px; }
.thumb-green { height: 18px; background: linear-gradient(#27c765, #7df09f); border-radius: 0 0 4px 4px; }

/* popup */
.popup { position: absolute; top: 67px; left: 2082px; width: 296px; height: 344px; background: #fff; border: 1px solid #ccc; border-radius: 4px; box-shadow: 0 6px 18px rgba(0, 0, 0, .25); }
.popup-title { height: 51px; padding: 18px 0 0 15px; font-size: 14px; line-height: 20px; font-weight: 700; color: #222; }
.ext-row { display: flex; align-items: center; height: 32px; font-size: 12px; color: #444; }
.ext-main { display: flex; align-items: center; width: 213px; height: 32px; padding-left: 15px; }
.ext-main svg { width: 16px; }
.ext-hover { background: #e3e3e3; }
.ext-name { margin-left: 12px; }
.ext-latin { letter-spacing: .6px; }
.ext-score { width: 24px; margin-left: 13px; color: #888; line-height: 18px; }
.pin { margin-left: 15px; fill: #8a8a8a; }
.pin-on { fill: #0dbd4e; }
.popup-foot { display: flex; align-items: center; height: 31px; margin-top: 4px; border-top: 1px solid #ddd; }
.foot-act { display: flex; flex: 1; align-items: center; justify-content: center; gap: 6px; font-size: 12px; color: #444; }
.foot-sep { width: 1px; height: 15px; background: #ddd; }
.foot-gear { color: #444; }

.arrow { position: absolute; left: 2235px; top: 395px; }
```
